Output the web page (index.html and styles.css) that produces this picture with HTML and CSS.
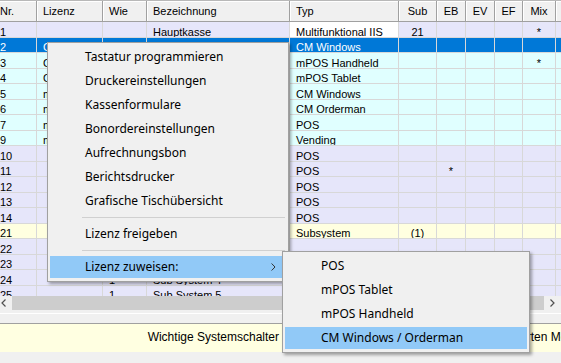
FILE: index.html
```html
<!DOCTYPE html>
<html lang="de">
<head>
<meta charset="utf-8">
<title>Kassen</title>
<link rel="stylesheet" href="styles.css">
</head>
<body>
<div class="grid">
  <div class="head">
    <span class="nr">Nr.</span><span>Lizenz</span><span>Wie</span><span>Bezeichnung</span><span>Typ</span><span class="c">Sub</span><span class="c">EB</span><span class="c">EV</span><span class="c">EF</span><span class="c">Mix</span><span></span>
  </div>
  <div class="r lav"><span class="nr">1</span><span></span><span></span><span>Hauptkasse</span><span class="white">Multifunktional IIS</span><span class="c">21</span><span></span><span></span><span></span><span class="c">*</span><span></span></div>
  <div class="r sel"><span class="nr">2</span><span>CM Windows</span><span></span><span>Kasse 2</span><span>CM Windows</span><span></span><span></span><span></span><span></span><span></span><span></span></div>
  <div class="r cyan"><span class="nr">3</span><span>CM Windows</span><span></span><span>Kasse 3</span><span>mPOS Handheld</span><span></span><span></span><span></span><span></span><span class="c">*</span><span></span></div>
  <div class="r cyan"><span class="nr">4</span><span>CM Windows</span><span></span><span>Kasse 4</span><span>mPOS Tablet</span><span></span><span></span><span></span><span></span><span></span><span></span></div>
  <div class="r cyan"><span class="nr">5</span><span>mPOS</span><span></span><span>Kasse 5</span><span>CM Windows</span><span></span><span></span><span></span><span></span><span></span><span></span></div>
  <div class="r cyan"><span class="nr">6</span><span>mPOS</span><span></span><span>Kasse 6</span><span>CM Orderman</span><span></span><span></span><span></span><span></span><span></span><span></span></div>
  <div class="r cyan"><span class="nr">7</span><span>mPOS</span><span></span><span>Kasse 7</span><span>POS</span><span></span><span></span><span></span><span></span><span></span><span></span></div>
  <div class="r cyan"><span class="nr">9</span><span>mPOS</span><span></span><span>Kasse 9</span><span>Vending</span><span></span><span></span><span></span><span></span><span></span><span></span></div>
  <div class="r lav"><span class="nr">10</span><span></span><span></span><span>Kasse 10</span><span>POS</span><span></span><span></span><span></span><span></span><span></span><span></span></div>
  <div class="r lav"><span class="nr">11</span><span></span><span></span><span>Kasse 11</span><span>POS</span><span></span><span class="c">*</span><span></span><span></span><span></span><span></span></div>
  <div class="r lav"><span class="nr">12</span><span></span><span></span><span>Kasse 12</span><span>POS</span><span></span><span></span><span></span><span></span><span></span><span></span></div>
  <div class="r lav"><span class="nr">13</span><span></span><span></span><span>Kasse 13</span><span>POS</span><span></span><span></span><span></span><span></span><span></span><span></span></div>
  <div class="r lav"><span class="nr">14</span><span></span><span></span><span>Kasse 14</span><span>POS</span><span></span><span></span><span></span><span></span><span></span><span></span></div>
  <div class="r yel"><span class="nr">21</span><span></span><span></span><span>Subsystem</span><span>Subsystem</span><span class="c">(1)</span><span></span><span></span><span></span><span></span><span></span></div>
  <div class="r lav"><span class="nr">22</span><span></span><span>1</span><span>Sub System 2</span><span></span><span></span><span></span><span></span><span></span><span></span><span></span></div>
  <div class="r lav"><span class="nr">23</span><span></span><span>1</span><span>Sub System 3</span><span></span><span></span><span></span><span></span><span></span><span></span><span></span></div>
  <div class="r lav"><span class="nr">24</span><span></span><span>1</span><span>Sub System 4</span><span></span><span></span><span></span><span></span><span></span><span></span><span></span></div>
  <div class="r lav"><span class="nr">25</span><span></span><span>1</span><span>Sub System 5</span><span></span><span></span><span></span><span></span><span></span><span></span><span></span></div>
</div>
<div class="hscroll">
  <div class="arrow"><svg width="5" height="8" viewBox="0 0 5 8"><path d="M4.5 0.5 L1 4 L4.5 7.5" fill="none" stroke="#505050" stroke-width="1.2"/></svg></div>
  <div class="thumb"></div>
  <div class="arrow"><svg width="5" height="8" viewBox="0 0 5 8"><path d="M0.5 0.5 L4 4 L0.5 7.5" fill="none" stroke="#505050" stroke-width="1.2"/></svg></div>
</div>
<div class="spacer"></div>
<div class="status">
  <span class="status-main">Wichtige Systemschalter</span>
  <span class="status-extra">erweiterten Modus</span>
</div>

<div class="menu main-menu">
  <div class="mi">Tastatur programmieren</div>
  <div class="mi">Druckereinstellungen</div>
  <div class="mi">Kassenformulare</div>
  <div class="mi">Bonordereinstellungen</div>
  <div class="mi">Aufrechnungsbon</div>
  <div class="mi">Berichtsdrucker</div>
  <div class="mi">Grafische Tischübersicht</div>
  <div class="sep"></div>
  <div class="mi">Lizenz freigeben</div>
  <div class="sep"></div>
  <div class="mi hot">Lizenz zuweisen:<svg class="chev" width="5" height="8" viewBox="0 0 5 8"><path d="M0.6 0.5 L4 4 L0.6 7.5" fill="none" stroke="#333" stroke-width="1"/></svg></div>
</div>

<div class="menu sub-menu">
  <div class="mi">POS</div>
  <div class="mi">mPOS Tablet</div>
  <div class="mi">mPOS Handheld</div>
  <div class="mi hot">CM Windows / Orderman</div>
</div>
</body>
</html>
```

FILE: styles.css
```css
* { box-sizing: border-box; }

body {
  margin: 0;
  width: 561px;
  height: 363px;
  overflow: hidden;
  position: relative;
  background: #f0f0f0;
  font-family: "Liberation Sans", Arial, sans-serif;
  font-size: 11px;
  color: #000;
}

.grid {
  height: 296px;
  overflow: hidden;
  background: #fff;
}

.head,
.r {
  display: grid;
  grid-template-columns: 37px 66px 44px 143px 109px 38px 29px 29px 28px 33px 40px;
  width: 596px;
}

.head {
  height: 22px;
  border-top: 1px solid #b8b8b8;
  background: #f0f0f0;
}

.head span {
  border-right: 1px solid #a0a0a0;
  border-bottom: 1px solid #a0a0a0;
  box-shadow: inset 1px 1px 0 #fff;
  padding-left: 6px;
  line-height: 19px;
  padding-top: 1px;
  white-space: nowrap;
  overflow: hidden;
}

.head span.nr { padding-left: 0; box-shadow: inset 0 1px 0 #fff; }
.head span.c { padding-left: 0; text-align: center; }

.r { height: 15.5px; }

.r span {
  border-right: 1px solid #d8d8d8;
  border-bottom: 1px solid #d8d8d8;
  padding-left: 6px;
  padding-top: 4.5px;
  line-height: 10px;
  white-space: nowrap;
  overflow: hidden;
}

.r span.nr { padding-left: 0; }
.r span.c { padding-left: 0; text-align: center; }

.lav { background: #e6e6fa; }
.cyan { background: #e0ffff; }
.yel { background: #ffffe0; }
.sel { background: #0078d7; color: #fff; }
.r span.white { background: #fff; }

.hscroll {
  display: flex;
  height: 17px;
  background: #f0f0f0;
}

.hscroll .arrow {
  width: 17px;
  flex: none;
  display: flex;
  align-items: center;
  justify-content: center;
  padding-bottom: 3px;
}

.hscroll .arrow:first-child { margin-left: -5px; }

.thumb {
  flex: 1;
  height: 14px;
  background: #cdcdcd;
}

.spacer {
  height: 11px;
  border-top: 1px solid #fff;
  border-bottom: 1px solid #a0a0a0;
}

.status {
  display: flex;
  height: 28px;
  background: #ffffe1;
  font-size: 12px;
  line-height: 27px;
  white-space: nowrap;
  overflow: hidden;
}

.status-main {
  width: 280px;
  flex: none;
  text-align: right;
  padding-right: 1px;
}

.status-extra {
  margin-left: 208px;
}

.menu {
  position: absolute;
  display: flex;
  flex-direction: column;
  background: #f0f0f0;
  border: 1px solid #a0a0a0;
  padding: 2px;
  box-shadow: 2px 2px 3px rgba(0, 0, 0, 0.35);
  font-family: "Noto Sans", "Segoe UI", sans-serif;
  font-size: 12px;
  color: #000;
}

.main-menu {
  left: 47px;
  top: 42px;
  width: 242px;
}

.sub-menu {
  left: 282px;
  top: 251px;
  width: 248px;
}

.mi {
  position: relative;
  flex: none;
  height: 22px;
  line-height: 22px;
  margin: 1px 0;
  padding-left: 35px;
  white-space: nowrap;
}

.sub-menu .mi { padding-left: 36px; }

.mi.hot { background: #91c9f7; }

.chev {
  position: absolute;
  right: 10px;
  top: 7px;
}

.sep {
  flex: none;
  height: 9px;
  margin: 0 1px 0 32px;
  padding-top: 4px;
}

.sep::after {
  content: "";
  display: block;
  height: 1px;
  background: #d0d0d0;
}
```
